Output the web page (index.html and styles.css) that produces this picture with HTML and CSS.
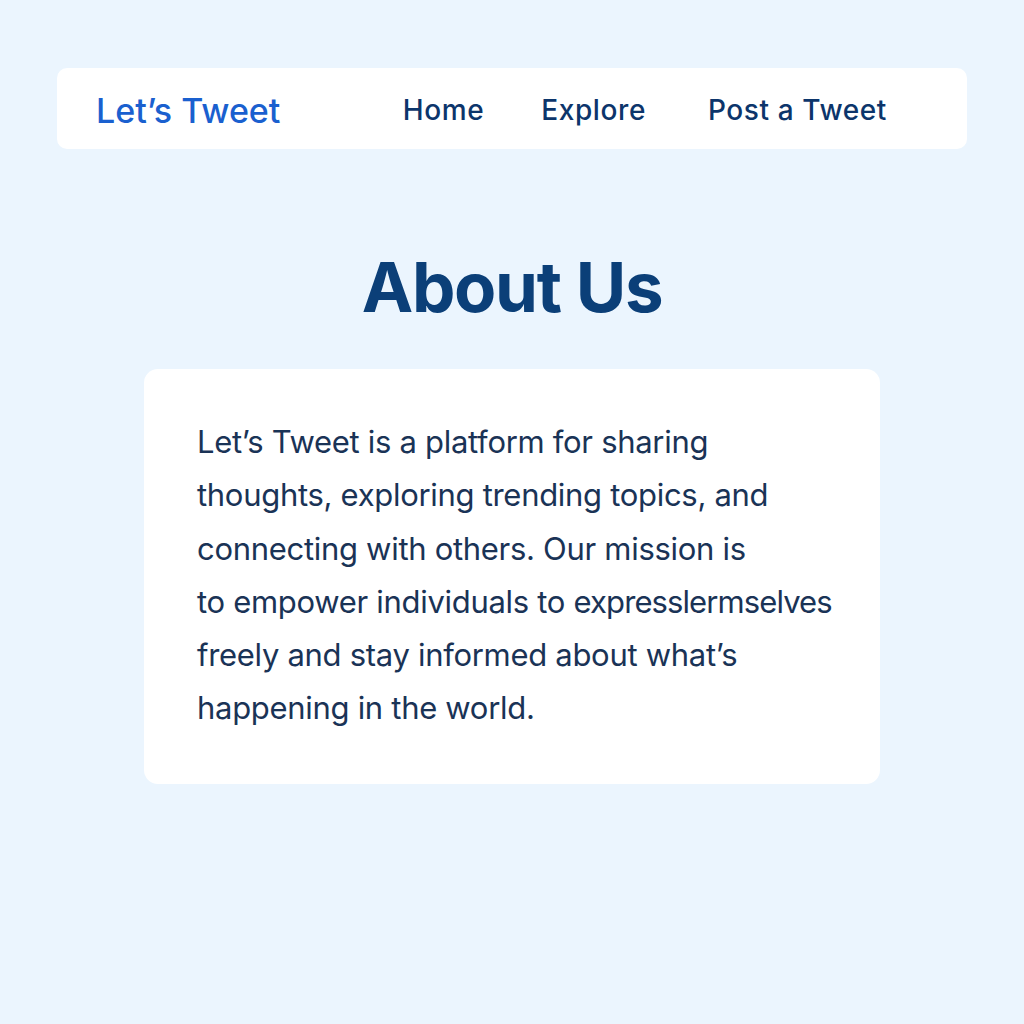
FILE: index.html
```html
<!DOCTYPE html>
<html lang="en">
<head>
<meta charset="utf-8">
<title>About Us - Let’s Tweet</title>
<link rel="stylesheet" href="styles.css">
</head>
<body>
<div class="page">
  <nav class="nav">
    <a class="logo" href="#">Let’s Tweet</a>
    <div class="links">
      <a class="link link-home" href="#">Home</a>
      <a class="link link-explore" href="#">Explore</a>
      <a class="link" href="#">Post a Tweet</a>
    </div>
  </nav>
  <h1 class="title">About Us</h1>
  <section class="card">
    <p class="text">Let’s Tweet is a platform for sharing<br>thoughts, exploring trending topics, and<br>connecting with others. Our mission is<br>to empower individuals to <span class="tight">expresslermselves</span><br>freely and stay informed about what’s<br>happening in the world.</p>
  </section>
</div>
</body>
</html>
```

FILE: styles.css
```css
* { box-sizing: border-box; }
html, body {
  margin: 0;
  padding: 0;
  background: #ebf5fe;
  font-family: Inter, "Noto Sans", "Liberation Sans", sans-serif;
}
.page {
  width: 910px;
  margin: 0 auto;
  padding-top: 68px;
}
.nav {
  display: flex;
  align-items: center;
  height: 81px;
  background: #ffffff;
  border-radius: 10px;
  padding: 3px 80px 0 39px;
}
.logo {
  font-size: 34px;
  font-weight: 500;
  color: #1a60cf;
  text-decoration: none;
}
.links {
  margin-left: auto;
  display: flex;
}
.link {
  font-size: 28px;
  font-weight: 500;
  color: #0c356b;
  text-decoration: none;
  letter-spacing: 0.6px;
}
.link-home { margin-right: 57px; }
.link-explore { margin-right: 62px; }
.title {
  margin: 93px 0 0;
  text-align: center;
  font-size: 69px;
  line-height: 90px;
  font-weight: 700;
  color: #0b3f78;
  letter-spacing: -1.3px;
}
.card {
  width: 736px;
  margin: 37px auto 0;
  background: #ffffff;
  border-radius: 14px;
  padding: 46px 30px 49px 53px;
}
.text {
  margin: 0;
  font-size: 31px;
  line-height: 53.3px;
  color: #1a3356;
  letter-spacing: -0.3px;
  white-space: nowrap;
}
.tight { letter-spacing: -0.9px; }
```
